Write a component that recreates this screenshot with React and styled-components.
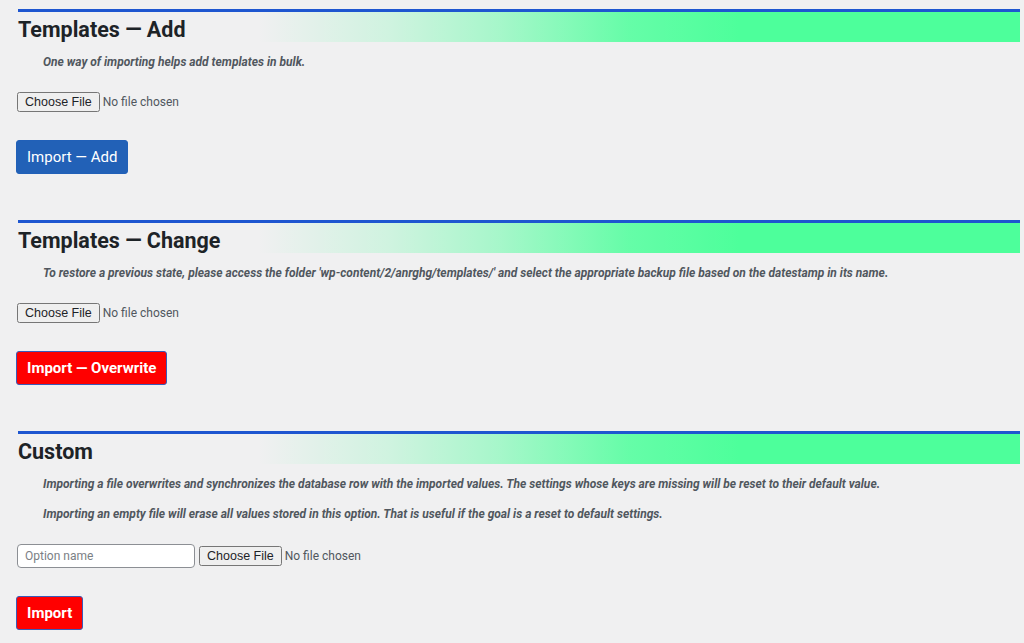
import React from "react";
import styled, { createGlobalStyle } from "styled-components";

const GlobalStyle = createGlobalStyle`
  body {
    margin: 0;
    background: #f0f0f1;
    font-family: Roboto, "Liberation Sans", sans-serif;
    color: #3c434a;
  }
`;

export default function App() {
  return (
    <>
      <GlobalStyle />
      <Page>
        <Section>
          <Heading>Templates — Add</Heading>
          <Description>One way of importing helps add templates in bulk.</Description>
          <Row>
            <FileInput type="file" />
          </Row>
          <Button>Import — Add</Button>
        </Section>

        <Section>
          <Heading>Templates — Change</Heading>
          <Description>
            To restore a previous state, please access the folder
            'wp-content/2/anrghg/templates/' and select the appropriate backup
            file based on the datestamp in its name.
          </Description>
          <Row>
            <FileInput type="file" />
          </Row>
          <Button $danger>Import — Overwrite</Button>
        </Section>

        <Section>
          <Heading>Custom</Heading>
          <Description>
            Importing a file overwrites and synchronizes the database row with
            the imported values. The settings whose keys are missing will be
            reset to their default value.
          </Description>
          <Description>
            Importing an empty file will erase all values stored in this
            option. That is useful if the goal is a reset to default settings.
          </Description>
          <Row>
            <TextInput type="text" placeholder="Option name" />
            <FileInput type="file" />
          </Row>
          <Button $danger>Import</Button>
        </Section>
      </Page>
    </>
  );
}

const Page = styled.div`
  padding: 9px 4px 0 18px;
  display: flex;
  flex-direction: column;
  gap: 46px;
`;

const Section = styled.section`
  display: flex;
  flex-direction: column;
  align-items: flex-start;
`;

const Heading = styled.h2`
  align-self: stretch;
  margin: 0;
  height: 30px;
  line-height: 35px;
  border-top: 3px solid #1e56d0;
  background: linear-gradient(
    90deg,
    rgba(77, 255, 155, 0) 24%,
    rgba(77, 255, 155, 0.2) 37%,
    rgba(77, 255, 155, 0.45) 48%,
    rgba(77, 255, 155, 0.85) 61%,
    #4dff9b 72%
  );
  font-size: 21.5px;
  font-weight: 700;
  color: #1d2327;
`;

const Description = styled.p`
  margin: 12px 0 2px 25px;
  font-size: 12px;
  line-height: 16px;
  font-style: italic;
  font-weight: 700;
  color: #50575e;
  & + & {
    margin-top: 12px;
  }
`;

const Row = styled.div`
  display: flex;
  align-items: center;
  gap: 4px;
  margin: 20px 0 28px -1px;
`;

const FileInput = styled.input`
  font-family: Roboto, "Liberation Sans", sans-serif;
  font-size: 12px;
  color: #50575e;
  &::file-selector-button {
    margin-right: 3px;
    font-family: "Liberation Sans", Arial, sans-serif;
    font-size: 12.5px;
    color: #1d2327;
  }
`;

const TextInput = styled.input`
  width: 178px;
  height: 24px;
  box-sizing: border-box;
  padding: 0 7px;
  border: 1px solid #8c8f94;
  border-radius: 4px;
  background: #fff;
  font-family: Roboto, sans-serif;
  font-size: 12px;
  &::placeholder {
    color: #7b8085;
  }
`;

const Button = styled.button`
  height: 34px;
  padding: 0 10px;
  margin-left: -2px;
  border: 1px solid ${(p) => (p.$danger ? "#3a5ab8" : "#2160b8")};
  border-radius: 3px;
  background: ${(p) => (p.$danger ? "#ff0000" : "#2261b7")};
  color: #fff;
  font-family: Roboto, sans-serif;
  font-size: 15px;
  font-weight: ${(p) => (p.$danger ? 700 : 400)};
  cursor: pointer;
`;
